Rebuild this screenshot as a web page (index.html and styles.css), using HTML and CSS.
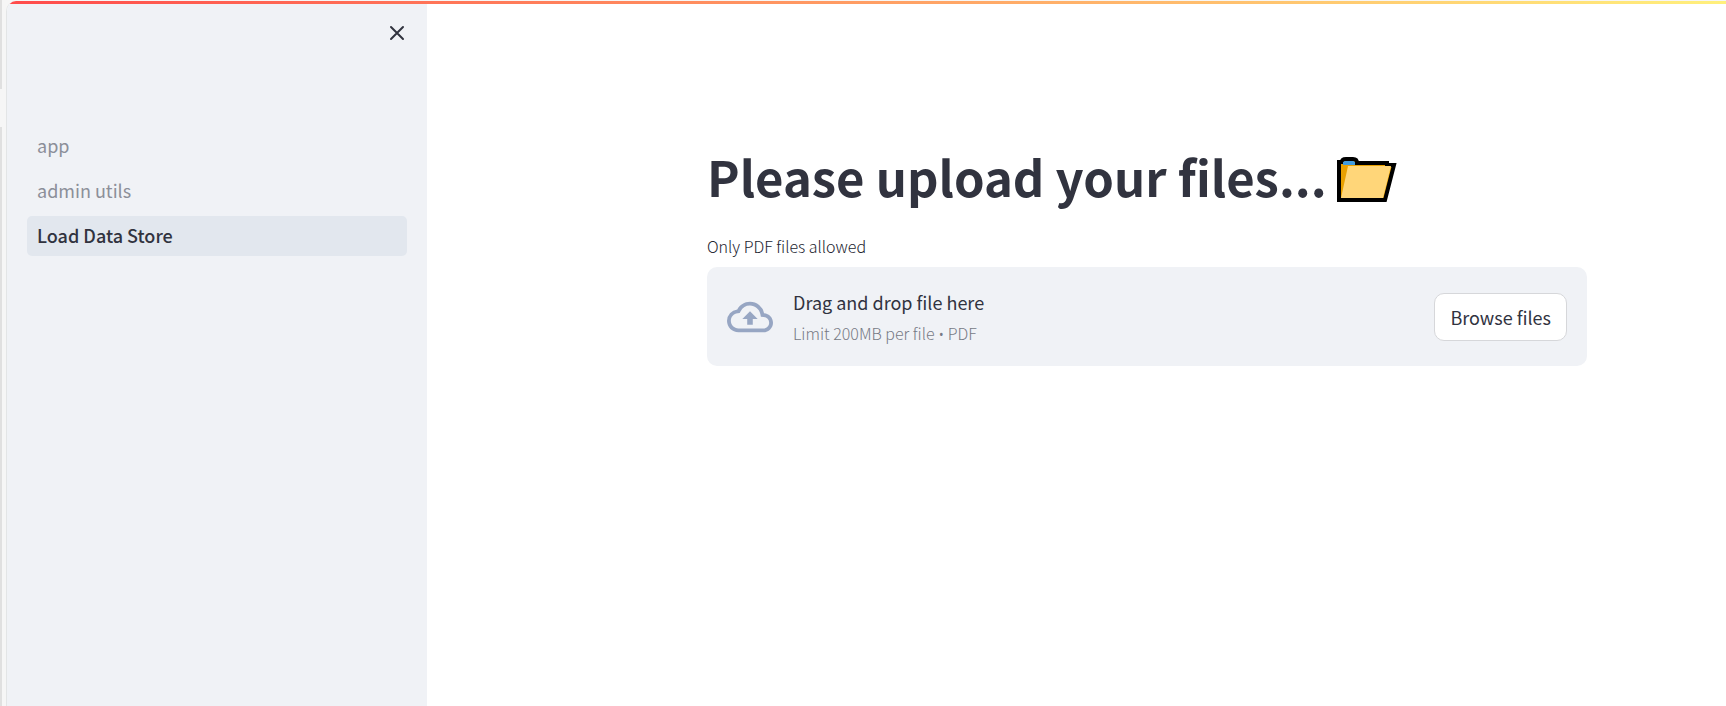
FILE: index.html
```html
<!DOCTYPE html>
<html lang="en">
<head>
  <meta charset="utf-8">
  <meta name="viewport" content="width=device-width, initial-scale=1">
  <title>Load Data Store</title>
  <link rel="stylesheet" href="styles.css">
</head>
<body>
  <div class="edge"><span class="edge-gap"></span></div>
  <div class="app">
    <div class="decoration"></div>
    <aside class="sidebar">
      <div class="sidebar-header">
        <button class="close" type="button" aria-label="Close sidebar">
          <svg width="16" height="16" viewBox="0 0 16 16" fill="none" stroke="currentColor" stroke-width="2" stroke-linecap="round"><path d="M2 2l12 12M14 2L2 14"/></svg>
        </button>
      </div>
      <nav class="nav">
        <a class="nav-link" href="#app">app</a>
        <a class="nav-link" href="#admin">admin utils</a>
        <a class="nav-link active" href="#load" aria-current="page">Load Data Store</a>
      </nav>
    </aside>
    <main class="main">
      <div class="content">
        <h1 class="title">Please upload your files...<svg class="folder" width="60" height="54" viewBox="0 -8 60 54" role="img" aria-label="Open folder">
            <path d="M2 43V5h3q0-3 4-3h7q4 0 4 4h30v2h7l-9 35z" fill="#e9a000"/>
            <path d="M2 43V5h3q0-3 4-3h7q4 0 4 4h30v2h7l-9 35z" fill="none" stroke="#000" stroke-width="4"/>
            <path d="M17 5h32v3H17z" fill="#000"/>
            <path d="M6 8V5l2-1h8l2 1v3z" fill="#3f9be0"/>
            <path d="M4 41L11 9h43l-8 32z" fill="#ffd679"/>
          </svg></h1>
        <label class="label" for="files">Only PDF files allowed</label>
        <section class="dropzone">
          <svg class="cloud" width="46" height="46" viewBox="0 0 24 24" fill="currentColor"><path d="M19.350 10.040A7.490 7.490 0 0 0 12 4C9.110 4 6.600 5.640 5.350 8.040A5.994 5.994 0 0 0 0 14c0 3.310 2.690 6 6 6h13c2.760 0 5-2.240 5-5 0-2.640-2.050-4.780-4.650-4.960zM19 18H6c-2.210 0-4-1.790-4-4 0-2.050 1.530-3.760 3.560-3.970l1.070-.11.5-.95A5.469 5.469 0 0 1 12 6c2.620 0 4.880 1.860 5.390 4.430l.3 1.500 1.530.11A2.980 2.980 0 0 1 22 15c0 1.650-1.350 3-3 3zM8 13h2.550v3h2.900v-3H16l-4-4z"/></svg>
          <div class="instructions">
            <span class="drop-text">Drag and drop file here</span>
            <span class="drop-hint">Limit 200MB per file <span class="bullet">•</span> PDF</span>
          </div>
          <button class="browse" id="files" type="button">Browse files</button>
        </section>
      </div>
    </main>
  </div>
</body>
</html>
```
FILE: styles.css
```css
* { box-sizing: border-box; }

body {
  margin: 0;
  min-height: 100vh;
  display: flex;
  background: #f6f6f6;
  color: #31333f;
  font-family: "Noto Sans CJK SC", "Noto Sans", sans-serif;
  font-size: 18px;
  font-weight: 400;
  line-height: 24px;
}

.edge {
  flex: none;
  width: 2px;
  margin-right: 4px;
  padding-top: 89px;
  background: #e0e0e0;
}

.edge-gap {
  display: block;
  height: 38px;
  background: #f6f6f6;
}

.app {
  position: relative;
  flex: 1;
  display: flex;
  margin-top: 1px;
  overflow: hidden;
  border-left: 1px solid #e3e5e6;
  border-top-left-radius: 10px;
  background: #fff;
}

.decoration {
  position: absolute;
  top: 0;
  left: 0;
  right: 0;
  height: 3px;
  background: linear-gradient(90deg, #ff4b4b, #fffd80 108%);
}

.sidebar {
  flex: none;
  width: 420px;
  padding: 20px;
  background: #f0f2f6;
}

.sidebar-header {
  display: flex;
  justify-content: flex-end;
  height: 105px;
}

.close {
  width: 20px;
  height: 24px;
  padding: 0;
  border: 0;
  background: none;
  color: #31333f;
}

.close svg { display: block; margin: auto; }

.nav {
  display: flex;
  flex-direction: column;
  gap: 5px;
}

.nav-link {
  padding: 7px 10px 9px;
  border-radius: 5px;
  color: #8c8f99;
  text-decoration: none;
}

.nav-link.active {
  background: #e2e7ee;
  color: #31333f;
  font-weight: 500;
}

.main {
  flex: 1;
  display: flex;
  justify-content: center;
  align-items: flex-start;
  padding: 142px 0 40px 141px;
}

.content { width: 100%; max-width: 880px; }

.title {
  display: flex;
  align-items: center;
  gap: 10px;
  margin: 0 0 25px;
  font-size: 49px;
  line-height: 66px;
  font-weight: 700;
}

.folder { flex: none; }

.label {
  display: block;
  margin-bottom: 9px;
  color: #22242f;
  font-size: 16px;
  font-weight: 300;
}

.dropzone {
  display: flex;
  align-items: center;
  padding: 20px;
  border-radius: 10px;
  background: #f0f2f6;
}

.cloud { flex: none; margin-right: 20px; color: #97a6c3; }

.instructions {
  display: flex;
  flex: 1;
  flex-direction: column;
  gap: 7px;
  padding-top: 3px;
}

.drop-hint {
  color: #777a85;
  font-size: 16px;
  font-weight: 300;
}

.bullet { font-family: "Noto Sans", sans-serif; }

.browse {
  height: 48px;
  padding: 0 15px;
  border: 1px solid #d6d7da;
  border-radius: 10px;
  background: #fff;
  color: inherit;
  font: inherit;
}
```
